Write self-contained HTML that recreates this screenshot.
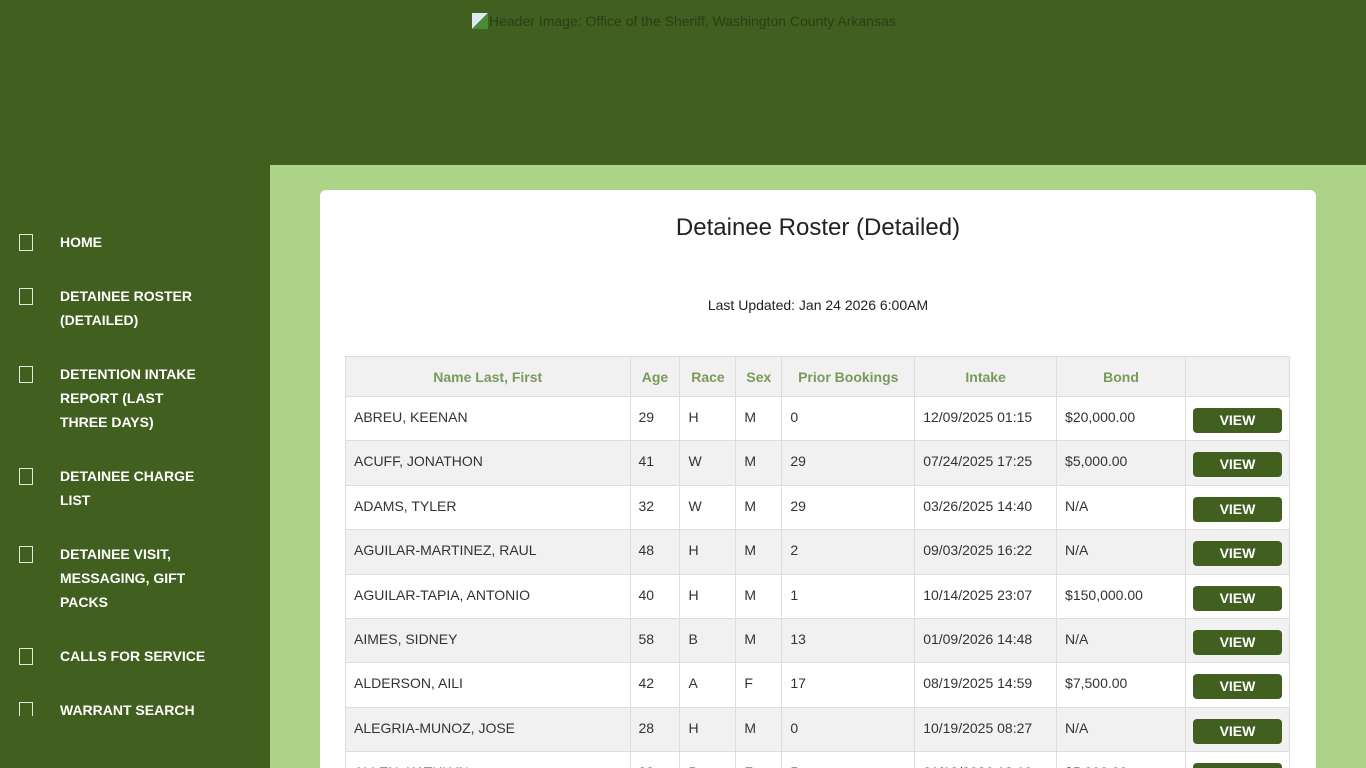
<!DOCTYPE html>
<html><head><meta charset="utf-8"><style>
*{box-sizing:border-box}
html,body{margin:0;width:1366px;height:768px;overflow:hidden}
body{background:#416020;font-family:"Liberation Sans",Arial,sans-serif;position:relative}
.hdr{position:absolute;left:472px;top:13px;font-size:14px;color:#2a3e14;display:flex;align-items:center}
.hdr i{display:inline-block;width:16px;height:16px;background:linear-gradient(135deg,#dfe8f0 50%,#4a8a3a 50%);margin-right:1px}
.side{position:absolute;left:0;top:165px;width:270px;height:551px;overflow:hidden}
.side ul{list-style:none;margin:0;padding:0;position:absolute;top:65px;left:0}
.side li{position:relative;padding-left:60px;width:210px;color:#fff;font-weight:bold;font-size:14px;line-height:24px;margin-bottom:30px}
.side li:before{content:"";position:absolute;left:19px;top:4px;width:12px;height:15px;border:1px solid #e8e8d8}
.main{position:absolute;left:270px;top:165px;width:1096px;height:603px;background:#acd388;overflow:hidden}
.card{position:absolute;left:50px;top:25px;width:996px;height:578px;background:#fff;border-radius:6px 6px 0 0;overflow:hidden}
h1{margin:0;position:absolute;top:24px;width:100%;text-align:center;font-weight:normal;font-size:24px;color:#222}
.upd{position:absolute;top:107px;width:100%;text-align:center;font-size:14px;color:#222}
table{position:absolute;left:25px;top:166px;width:945px;border-collapse:collapse;font-size:14px;color:#333}
th,td{border:1px solid #ddd}
th{background:#f1f1f1;color:#7a9a5a;height:40px;font-weight:bold}
td{height:44.4px;vertical-align:top;padding:12px 8px 0}
tbody tr:nth-child(even) td{background:#f1f1f1}
tbody tr:nth-child(odd) td{background:#fff}
b.v{display:block;width:89px;height:25px;margin:0 auto;background:#416020;color:#fff;border-radius:4px;text-align:center;line-height:25px;font-size:14px}
td.b{padding:11px 7px 0}
</style></head><body>
<div class="hdr"><i></i>Header Image: Office of the Sheriff, Washington County Arkansas</div>
<div class="side"><ul>
<li>HOME</li>
<li>DETAINEE ROSTER (DETAILED)</li>
<li>DETENTION INTAKE REPORT (LAST THREE DAYS)</li>
<li>DETAINEE CHARGE LIST</li>
<li>DETAINEE VISIT, MESSAGING, GIFT PACKS</li>
<li>CALLS FOR SERVICE</li>
<li>WARRANT SEARCH</li>
</ul></div>
<div class="main"><div class="card">
<h1>Detainee Roster (Detailed)</h1>
<div class="upd">Last Updated: Jan 24 2026 6:00AM</div>
<table>
<colgroup><col style="width:285px"><col style="width:50px"><col style="width:56px"><col style="width:46px"><col style="width:133px"><col style="width:142px"><col style="width:129px"><col style="width:104px"></colgroup>
<thead><tr><th>Name Last, First</th><th>Age</th><th>Race</th><th>Sex</th><th>Prior Bookings</th><th>Intake</th><th>Bond</th><th></th></tr></thead>
<tbody>
<tr><td>ABREU, KEENAN</td><td>29</td><td>H</td><td>M</td><td>0</td><td>12/09/2025 01:15</td><td>$20,000.00</td><td class="b"><b class="v">VIEW</b></td></tr>
<tr><td>ACUFF, JONATHON</td><td>41</td><td>W</td><td>M</td><td>29</td><td>07/24/2025 17:25</td><td>$5,000.00</td><td class="b"><b class="v">VIEW</b></td></tr>
<tr><td>ADAMS, TYLER</td><td>32</td><td>W</td><td>M</td><td>29</td><td>03/26/2025 14:40</td><td>N/A</td><td class="b"><b class="v">VIEW</b></td></tr>
<tr><td>AGUILAR-MARTINEZ, RAUL</td><td>48</td><td>H</td><td>M</td><td>2</td><td>09/03/2025 16:22</td><td>N/A</td><td class="b"><b class="v">VIEW</b></td></tr>
<tr><td>AGUILAR-TAPIA, ANTONIO</td><td>40</td><td>H</td><td>M</td><td>1</td><td>10/14/2025 23:07</td><td>$150,000.00</td><td class="b"><b class="v">VIEW</b></td></tr>
<tr><td>AIMES, SIDNEY</td><td>58</td><td>B</td><td>M</td><td>13</td><td>01/09/2026 14:48</td><td>N/A</td><td class="b"><b class="v">VIEW</b></td></tr>
<tr><td>ALDERSON, AILI</td><td>42</td><td>A</td><td>F</td><td>17</td><td>08/19/2025 14:59</td><td>$7,500.00</td><td class="b"><b class="v">VIEW</b></td></tr>
<tr><td>ALEGRIA-MUNOZ, JOSE</td><td>28</td><td>H</td><td>M</td><td>0</td><td>10/19/2025 08:27</td><td>N/A</td><td class="b"><b class="v">VIEW</b></td></tr>
<tr><td>ALLEN, KATHLYN</td><td>33</td><td>B</td><td>F</td><td>5</td><td>01/13/2026 13:10</td><td>$5,000.00</td><td class="b"><b class="v">VIEW</b></td></tr>
</tbody></table>
</div></div>
</body></html>
